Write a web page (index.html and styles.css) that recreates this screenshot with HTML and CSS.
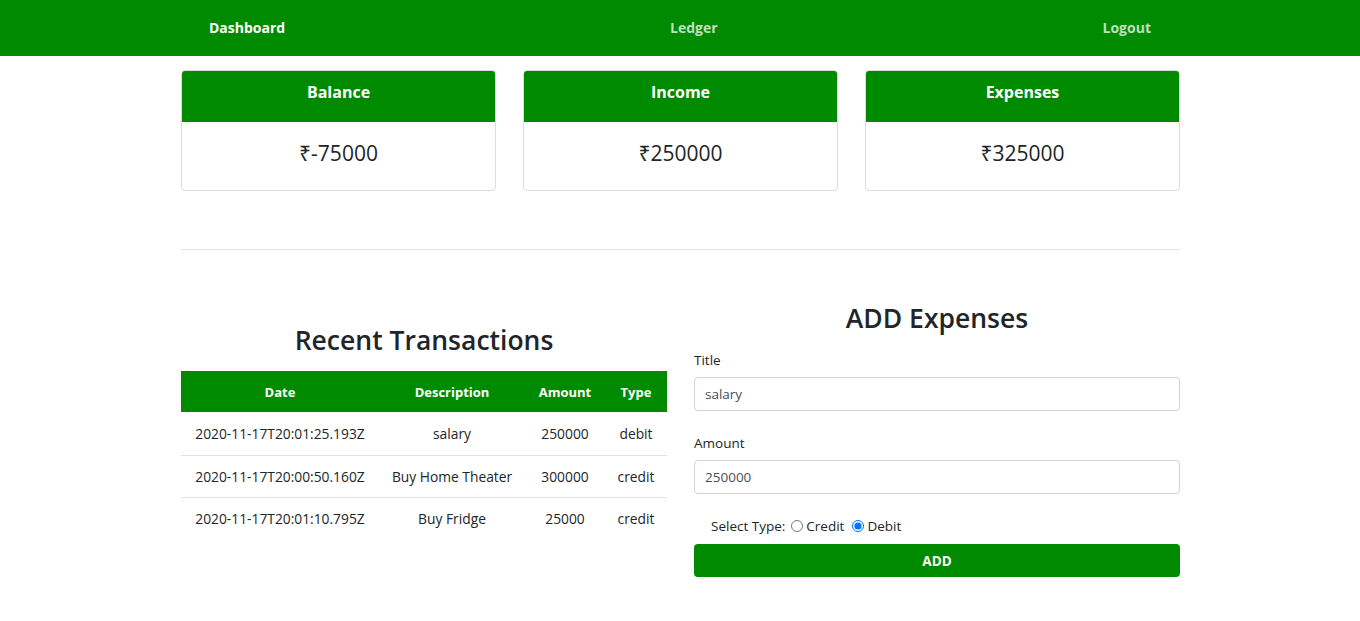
FILE: index.html
```html
<!DOCTYPE html>
<html lang="en">
<head>
<meta charset="utf-8">
<title>Dashboard</title>
<link rel="stylesheet" href="styles.css">
</head>
<body>
<nav class="topnav">
  <a class="nav-link active" href="#">Dashboard</a>
  <a class="nav-link" href="#">Ledger</a>
  <a class="nav-link" href="#">Logout</a>
</nav>
<main class="container">
  <section class="cards">
    <div class="card">
      <div class="card-header">Balance</div>
      <div class="card-body">₹-75000</div>
    </div>
    <div class="card">
      <div class="card-header">Income</div>
      <div class="card-body">₹250000</div>
    </div>
    <div class="card">
      <div class="card-header">Expenses</div>
      <div class="card-body">₹325000</div>
    </div>
  </section>
  <hr class="divider">
  <section class="lower">
    <div class="col col-left">
      <h2 class="heading">Recent Transactions</h2>
      <table class="tx-table">
        <thead>
          <tr>
            <th class="c-date">Date</th>
            <th class="c-desc">Description</th>
            <th class="c-amt">Amount</th>
            <th class="c-type">Type</th>
          </tr>
        </thead>
        <tbody>
          <tr><td>2020-11-17T20:01:25.193Z</td><td>salary</td><td>250000</td><td>debit</td></tr>
          <tr><td>2020-11-17T20:00:50.160Z</td><td>Buy Home Theater</td><td>300000</td><td>credit</td></tr>
          <tr><td>2020-11-17T20:01:10.795Z</td><td>Buy Fridge</td><td>25000</td><td>credit</td></tr>
        </tbody>
      </table>
    </div>
    <div class="col col-right">
      <h2 class="heading">ADD Expenses</h2>
      <form class="form">
        <div class="form-group">
          <label class="label" for="title">Title</label>
          <input class="input" id="title" type="text" value="salary">
        </div>
        <div class="form-group">
          <label class="label" for="amount">Amount</label>
          <input class="input" id="amount" type="text" value="250000">
        </div>
        <div class="radio-row">
          <span class="radio-label">Select Type:</span>
          <label class="radio"><input type="radio" name="type"> Credit</label>
          <label class="radio"><input type="radio" name="type" checked> Debit</label>
        </div>
        <button class="btn" type="button">ADD</button>
      </form>
    </div>
  </section>
</main>
</body>
</html>
```

FILE: styles.css
```css
* { box-sizing: border-box; }
html, body { margin: 0; padding: 0; }
body {
  font-family: "Open Sans", "Noto Sans", "DejaVu Sans", sans-serif;
  font-size: 13px;
  color: #212529;
  background: #fff;
}
.topnav {
  height: 56px;
  background: #008a00;
  display: flex;
  justify-content: space-between;
  align-items: center;
  padding: 0 209px 2px;
}
.nav-link {
  font-size: 14px;
  font-weight: 700;
  color: rgba(255,255,255,0.75);
  text-decoration: none;
}
.nav-link.active { color: #fff; }
.container {
  width: 1000px;
  margin: 0 auto;
  padding-left: 1px;
}
.cards {
  display: grid;
  grid-template-columns: repeat(3, 1fr);
  gap: 27px;
  margin-top: 14px;
}
.card {
  border: 1px solid #dcdcdc;
  border-radius: 4px;
  overflow: hidden;
}
.card-header {
  height: 51px;
  background: #008a00;
  color: #fff;
  font-size: 16px;
  font-weight: 700;
  display: flex;
  justify-content: center;
  align-items: center;
  padding-bottom: 9px;
}
.card-body {
  height: 68px;
  display: flex;
  justify-content: center;
  align-items: center;
  font-size: 21px;
  padding-bottom: 7px;
}
.divider {
  border: 0;
  border-top: 1px solid #e5e5e5;
  margin: 58px 0 0;
}
.lower {
  display: grid;
  grid-template-columns: 1fr 1fr;
  gap: 27px;
  margin-top: 49px;
  align-items: start;
}
.col-left { padding-top: 22px; }
.heading {
  margin: 0 0 12px;
  text-align: center;
  font-size: 26.5px;
  font-weight: 600;
  line-height: 38px;
}
.tx-table {
  width: 100%;
  border-collapse: collapse;
  text-align: center;
  font-size: 13.8px;
}
.tx-table th {
  background: #008a00;
  color: #fff;
  font-weight: 700;
  font-size: 13px;
  height: 41px;
  padding: 0;
}
.c-date { width: 198px; }
.c-desc { width: 146px; }
.c-amt { width: 80px; }
.c-type { width: 62px; }
.tx-table td {
  height: 42px;
  padding: 0;
  border-top: 1px solid #dee2e6;
}
.tx-table tbody tr:first-child td { border-top: 0; height: 43px; }
.form { padding-top: 1px; }
.form-group { margin-bottom: 22px; }
.label {
  display: block;
  line-height: 20px;
  margin-bottom: 7px;
  font-size: 13.5px;
}
.input {
  display: block;
  width: 100%;
  height: 34px;
  border: 1px solid #ced4da;
  border-radius: 4px;
  padding: 0 10px;
  font-family: inherit;
  font-size: 13.5px;
  color: #495057;
}
.radio-row {
  display: flex;
  align-items: center;
  padding-left: 17px;
  margin-top: 22px;
  height: 20px;
  font-size: 13.5px;
}
.radio-label { margin-right: 6px; }
.radio {
  display: flex;
  align-items: center;
  margin-right: 8px;
}
.radio input { margin: 0 3px 0 0; width: 12px; height: 12px; }
.btn {
  display: block;
  width: 100%;
  height: 33px;
  margin-top: 8px;
  background: #008a00;
  color: #fff;
  border: 0;
  border-radius: 4px;
  font-family: inherit;
  font-size: 13.5px;
  font-weight: 700;
}
```
